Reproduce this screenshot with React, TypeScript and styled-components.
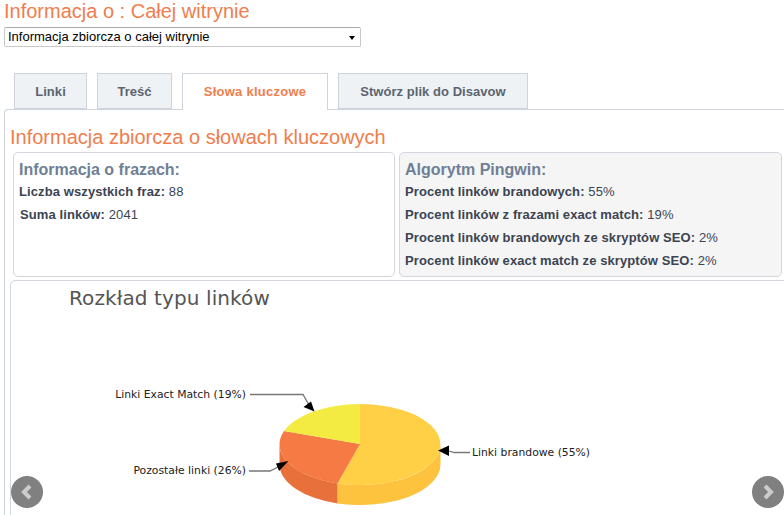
import React from 'react';
import styled, { createGlobalStyle } from 'styled-components';

const GlobalStyle = createGlobalStyle`
  html, body {
    margin: 0;
    padding: 0;
    background: #fff;
    overflow: hidden;
  }
`;

const tabs = [
  { label: 'Linki', width: 73 },
  { label: 'Treść', width: 75 },
  { label: 'Słowa kluczowe', width: 146, active: true },
  { label: 'Stwórz plik do Disavow', width: 190 },
];

const phraseStats = [
  { label: 'Liczba wszystkich fraz:', value: '88' },
  { label: 'Suma linków:', value: '2041', nudge: true },
];

const penguinStats = [
  { label: 'Procent linków brandowych:', value: '55%' },
  { label: 'Procent linków z frazami exact match:', value: '19%' },
  { label: 'Procent linków brandowych ze skryptów SEO:', value: '2%' },
  { label: 'Procent linków exact match ze skryptów SEO:', value: '2%' },
];

const PieChart = () => (
  <svg width="774" height="235" viewBox="11 281 774 235" style={{ display: 'block' }}>
    <ChartTitle x="69" y="305">Rozkład typu linków</ChartTitle>

    {/* pie sides */}
    <path d="M337.5 483.4 A80.5 40.5 0 0 0 440.5 444.5 V464.5 A80.5 40.5 0 0 1 337.5 503.4 Z" fill="#fdc23e" />
    <path d="M279.5 444.5 V464.5 A80.5 40.5 0 0 0 337.5 503.4 V483.4 A80.5 40.5 0 0 1 279.5 444.5 Z" fill="#e8703a" />

    {/* pie top */}
    <path d="M360 444 V404 A80.5 40.5 0 1 1 337.5 483.4 Z" fill="#ffd046" />
    <path d="M360 444 L337.5 483.4 A80.5 40.5 0 0 1 284 431.1 Z" fill="#f57a43" />
    <path d="M360 444 L284 431.1 A80.5 40.5 0 0 1 360 404 Z" fill="#f3ea42" />

    {/* callouts */}
    <Leader d="M250 394.5 H303 L309 405" />
    <path d="M314.5 411.5 L303.5 407 L311 401.5 Z" fill="#000" />
    <Leader d="M249 471 H270 L280 466" />
    <path d="M288.5 461 L279 471 L276 463.5 Z" fill="#000" />
    <Leader d="M449 451 L454 452.5 H470" />
    <path d="M438 450.5 L449 445.5 L449 456 Z" fill="#000" />

    <ChartLabel x="246" y="398" textAnchor="end">Linki Exact Match (19%)</ChartLabel>
    <ChartLabel x="246" y="474" textAnchor="end">Pozostałe linki (26%)</ChartLabel>
    <ChartLabel x="472" y="456">Linki brandowe (55%)</ChartLabel>
  </svg>
);

export default function App() {
  return (
    <Page>
      <GlobalStyle />
      <Title>Informacja o : Całej witrynie</Title>
      <Select>
        <span>Informacja zbiorcza o całej witrynie</span>
        <Caret />
      </Select>

      <TabBar>
        {tabs.map((tab) => (
          <Tab key={tab.label} active={tab.active} $width={tab.width}>
            {tab.label}
          </Tab>
        ))}
      </TabBar>

      <Panel>
        <PanelHeading>Informacja zbiorcza o słowach kluczowych</PanelHeading>
        <Boxes>
          <Box>
            <BoxHeading>Informacja o frazach:</BoxHeading>
            {phraseStats.map((stat) => (
              <Stat key={stat.label} nudge={stat.nudge}>
                <b>{stat.label}</b> {stat.value}
              </Stat>
            ))}
          </Box>
          <Box shaded>
            <BoxHeading>Algorytm Pingwin:</BoxHeading>
            {penguinStats.map((stat) => (
              <Stat key={stat.label}>
                <b>{stat.label}</b> {stat.value}
              </Stat>
            ))}
          </Box>
        </Boxes>
        <ChartCard>
          <PieChart />
        </ChartCard>
      </Panel>

      <NavButton side="left" aria-label="Poprzedni">
        <svg width="14" height="16" viewBox="0 0 14 16">
          <path d="M10 2 L4 8 L10 14" fill="none" stroke="#ccc" strokeWidth="4" />
        </svg>
      </NavButton>
      <NavButton side="right" aria-label="Następny">
        <svg width="14" height="16" viewBox="0 0 14 16">
          <path d="M4 2 L10 8 L4 14" fill="none" stroke="#ccc" strokeWidth="4" />
        </svg>
      </NavButton>
    </Page>
  );
}

const Page = styled.div`
  position: relative;
  width: 784px;
  height: 515px;
  overflow: hidden;
  font-family: 'Liberation Sans', Arial, sans-serif;
  color: #3b4452;
`;

const Title = styled.h1`
  margin: 0 0 0 4px;
  height: 27px;
  font-size: 20px;
  line-height: 23px;
  font-weight: normal;
  color: #ef7d4d;
`;

const Select = styled.div`
  box-sizing: border-box;
  display: flex;
  align-items: center;
  justify-content: space-between;
  width: 357px;
  height: 20px;
  margin-left: 4px;
  padding: 0 5px 2px 3px;
  border: 1px solid #c8c8c8;
  border-top-color: #a9a9a9;
  border-radius: 2px;
  font-size: 13px;
  color: #000;
`;

const Caret = styled.div`
  margin-top: 4px;
  border-left: 3.5px solid transparent;
  border-right: 3.5px solid transparent;
  border-top: 4px solid #000;
`;

const TabBar = styled.div`
  display: flex;
  gap: 10px;
  height: 36px;
  margin-top: 26px;
  padding-left: 14px;
`;

const Tab = styled.div<{ active?: boolean; $width: number }>`
  box-sizing: border-box;
  position: relative;
  z-index: 1;
  width: ${({ $width }) => $width}px;
  height: ${({ active }) => (active ? '37px' : '36px')};
  border: 1px solid #cfd4dc;
  border-bottom: ${({ active }) => (active ? 'none' : '1px solid #cfd4dc')};
  background: ${({ active }) => (active ? '#fff' : '#eff2f5')};
  color: ${({ active }) => (active ? '#ef7d4d' : '#5b6470')};
  font-size: 13px;
  font-weight: bold;
  letter-spacing: ${({ active }) => (active ? '0.25px' : '0.05px')};
  line-height: 35px;
  text-align: center;
  white-space: nowrap;
`;

const Panel = styled.div`
  width: 800px;
  margin-left: 4px;
  padding: 0 0 0 5px;
  border-top: 1px solid #cfd4dc;
  border-left: 1px solid #cfd4dc;
  border-top-left-radius: 4px;
`;

const PanelHeading = styled.h2`
  margin: 0;
  padding: 16px 0 0;
  height: 26px;
  font-size: 20px;
  line-height: 23px;
  font-weight: normal;
  color: #ef7d4d;
`;

const Boxes = styled.div`
  display: flex;
  gap: 4px;
  margin: 0 0 3px 3px;
`;

const Box = styled.div<{ shaded?: boolean }>`
  box-sizing: border-box;
  width: ${({ shaded }) => (shaded ? '383px' : '382px')};
  height: 125px;
  padding: 8px 5px 0;
  border: 1px solid #d2d6dd;
  border-radius: 5px;
  background: ${({ shaded }) => (shaded ? '#f5f5f5' : '#fff')};
`;

const BoxHeading = styled.div`
  height: 19px;
  font-size: 16px;
  line-height: 18px;
  font-weight: bold;
  color: #6f7f96;
`;

const Stat = styled.div<{ nudge?: boolean }>`
  height: 23px;
  margin-left: ${({ nudge }) => (nudge ? '1px' : '0')};
  font-size: 13px;
  letter-spacing: 0.1px;
  line-height: 23px;
  white-space: nowrap;
`;

const ChartCard = styled.div`
  width: 790px;
  height: 240px;
  border: 1px solid #d2d6dd;
  border-radius: 5px;
`;

const ChartTitle = styled.text`
  font-family: 'DejaVu Sans', sans-serif;
  font-size: 20px;
  letter-spacing: 0.1px;
  fill: #555;
`;

const ChartLabel = styled.text`
  font-family: 'DejaVu Sans', sans-serif;
  font-size: 10.8px;
  fill: #222;
`;

const Leader = styled.path`
  fill: none;
  stroke: #777;
  stroke-width: 1.3;
`;

const NavButton = styled.div<{ side: 'left' | 'right' }>`
  position: absolute;
  top: 476px;
  ${({ side }) => (side === 'left' ? 'left: 11px;' : 'left: 752px;')}
  display: flex;
  align-items: center;
  justify-content: center;
  width: 32px;
  height: 32px;
  border-radius: 50%;
  background: #808080;
`;
